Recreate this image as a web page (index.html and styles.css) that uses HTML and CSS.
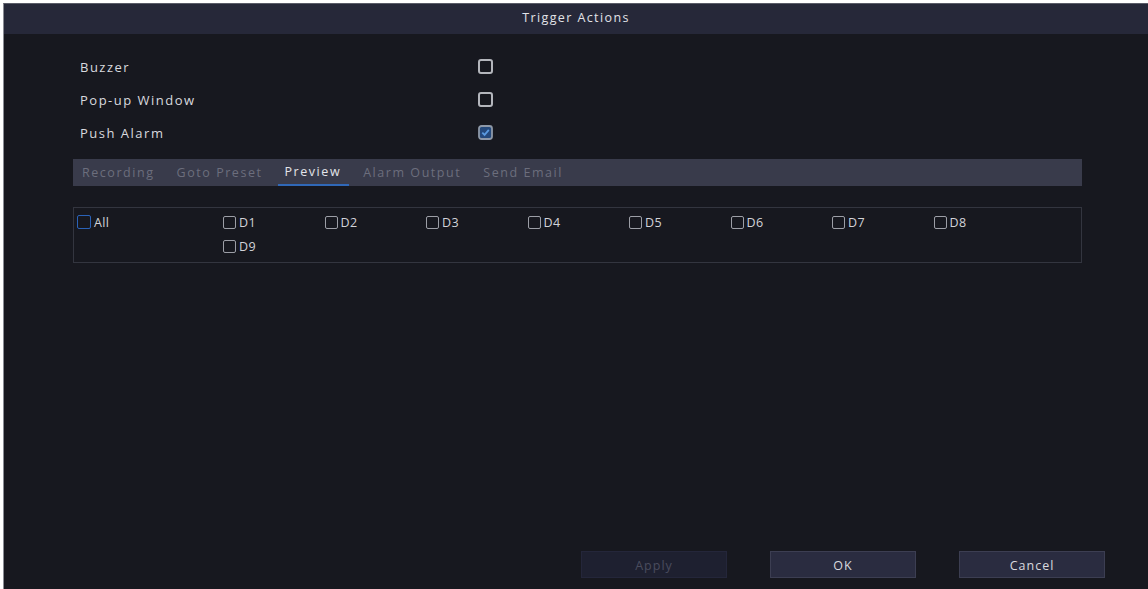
FILE: index.html
```html
<!DOCTYPE html>
<html>
<head>
<meta charset="utf-8">
<link rel="stylesheet" href="styles.css">
</head>
<body>
<div class="dialog">
  <div class="titlebar">Trigger Actions</div>
  <div class="content">
    <div class="opt-row"><span class="opt-label">Buzzer</span><span class="cb"></span></div>
    <div class="opt-row"><span class="opt-label">Pop-up Window</span><span class="cb"></span></div>
    <div class="opt-row"><span class="opt-label">Push Alarm</span>
      <svg class="cb-checked" width="15" height="15" viewBox="0 0 15 15"><rect x="1" y="1" width="13" height="13" rx="2.5" fill="#24497c" stroke="#8d98a8" stroke-width="1.8"/><path d="M4.3 7.6 L6.6 9.9 L10.8 4.9" fill="none" stroke="#5a9ae0" stroke-width="1.8"/></svg>
    </div>
    <div class="tabbar">
      <span class="tab">Recording</span>
      <span class="tab">Goto Preset</span>
      <span class="tab active">Preview</span>
      <span class="tab">Alarm Output</span>
      <span class="tab">Send Email</span>
    </div>
    <div class="chanbox">
      <div class="chan all"><span class="sq"></span>All</div>
      <div class="chan"><span class="sq"></span>D1</div>
      <div class="chan"><span class="sq"></span>D2</div>
      <div class="chan"><span class="sq"></span>D3</div>
      <div class="chan"><span class="sq"></span>D4</div>
      <div class="chan"><span class="sq"></span>D5</div>
      <div class="chan"><span class="sq"></span>D6</div>
      <div class="chan"><span class="sq"></span>D7</div>
      <div class="chan"><span class="sq"></span>D8</div>
      <div class="chan skip"><span class="sq"></span>D9</div>
    </div>
  </div>
  <div class="spacer"></div>
  <div class="buttons">
    <div class="btn disabled">Apply</div>
    <div class="btn">OK</div>
    <div class="btn">Cancel</div>
  </div>
</div>
</body>
</html>
```

FILE: styles.css
```css
html, body {
  margin: 0;
  padding: 0;
  background: #ffffff;
  height: 100%;
  overflow: hidden;
}
body {
  font-family: "Open Sans", "DejaVu Sans", sans-serif;
  font-size: 12.5px;
  color: #d6d7dc;
}
.dialog {
  margin: 3px 0 0 3px;
  height: 586px;
  border-left: 1px solid #8a8c94;
  border-top: 1px solid #5a5c68;
  box-sizing: border-box;
  background: #17181f;
  display: flex;
  flex-direction: column;
}
.titlebar {
  height: 30px;
  line-height: 28px;
  background: #262839;
  text-align: center;
  font-size: 12.5px;
  letter-spacing: 1.4px;
  color: #e2e3e8;
}
.content {
  padding: 16px 66px 0 69px;
}
.opt-row {
  height: 33px;
  display: flex;
  align-items: center;
  padding-left: 7px;
}
.opt-label {
  width: 398px;
  font-size: 13px;
  letter-spacing: 1.5px;
  color: #d9dadf;
}
.cb {
  width: 11px;
  height: 11px;
  border: 2px solid #b4b6bc;
  border-radius: 3px;
}
.cb-checked {
  display: block;
}
.tabbar {
  margin-top: 10px;
  height: 27px;
  background: #393b4b;
  display: flex;
  align-items: stretch;
  padding-left: 2px;
  gap: 7px;
}
.tab {
  padding: 0 8px 0 7px;
  line-height: 27px;
  color: #6c6e7d;
  letter-spacing: 1.55px;
  box-sizing: border-box;
}
.tab.active {
  color: #e4e5ea;
  border-bottom: 2px solid #3068b8;
  line-height: 25px;
}
.chanbox {
  margin-top: 21px;
  height: 56px;
  border: 1px solid #33353f;
  box-sizing: border-box;
  display: grid;
  grid-template-columns: 146px repeat(8, 101.5px);
  grid-auto-rows: 24px;
  padding: 7px 0 0 3px;
  font-size: 12.5px;
}
.chan {
  display: flex;
  align-items: center;
  gap: 3px;
  color: #d2d3d8;
  height: 14px;
  letter-spacing: 0.4px;
}
.chan .sq {
  width: 11px;
  height: 11px;
  border: 1.5px solid #9c9ea6;
  border-radius: 2px;
}
.chan.all .sq {
  border-color: #2a62b8;
  width: 12px;
  height: 12px;
}
.chan.skip {
  grid-column: 2;
}
.spacer {
  flex: 1;
}
.buttons {
  display: flex;
  justify-content: flex-end;
  gap: 43px;
  padding: 0 43px 11px 0;
}
.btn {
  width: 146px;
  height: 27px;
  line-height: 27px;
  text-align: center;
  background: #2a2c40;
  border: 1px solid #3c3e52;
  box-sizing: border-box;
  color: #d8d9de;
  letter-spacing: 1px;
}
.btn.disabled {
  background: #1e2030;
  border-color: #24263a;
  color: #4a4c5e;
}
```
